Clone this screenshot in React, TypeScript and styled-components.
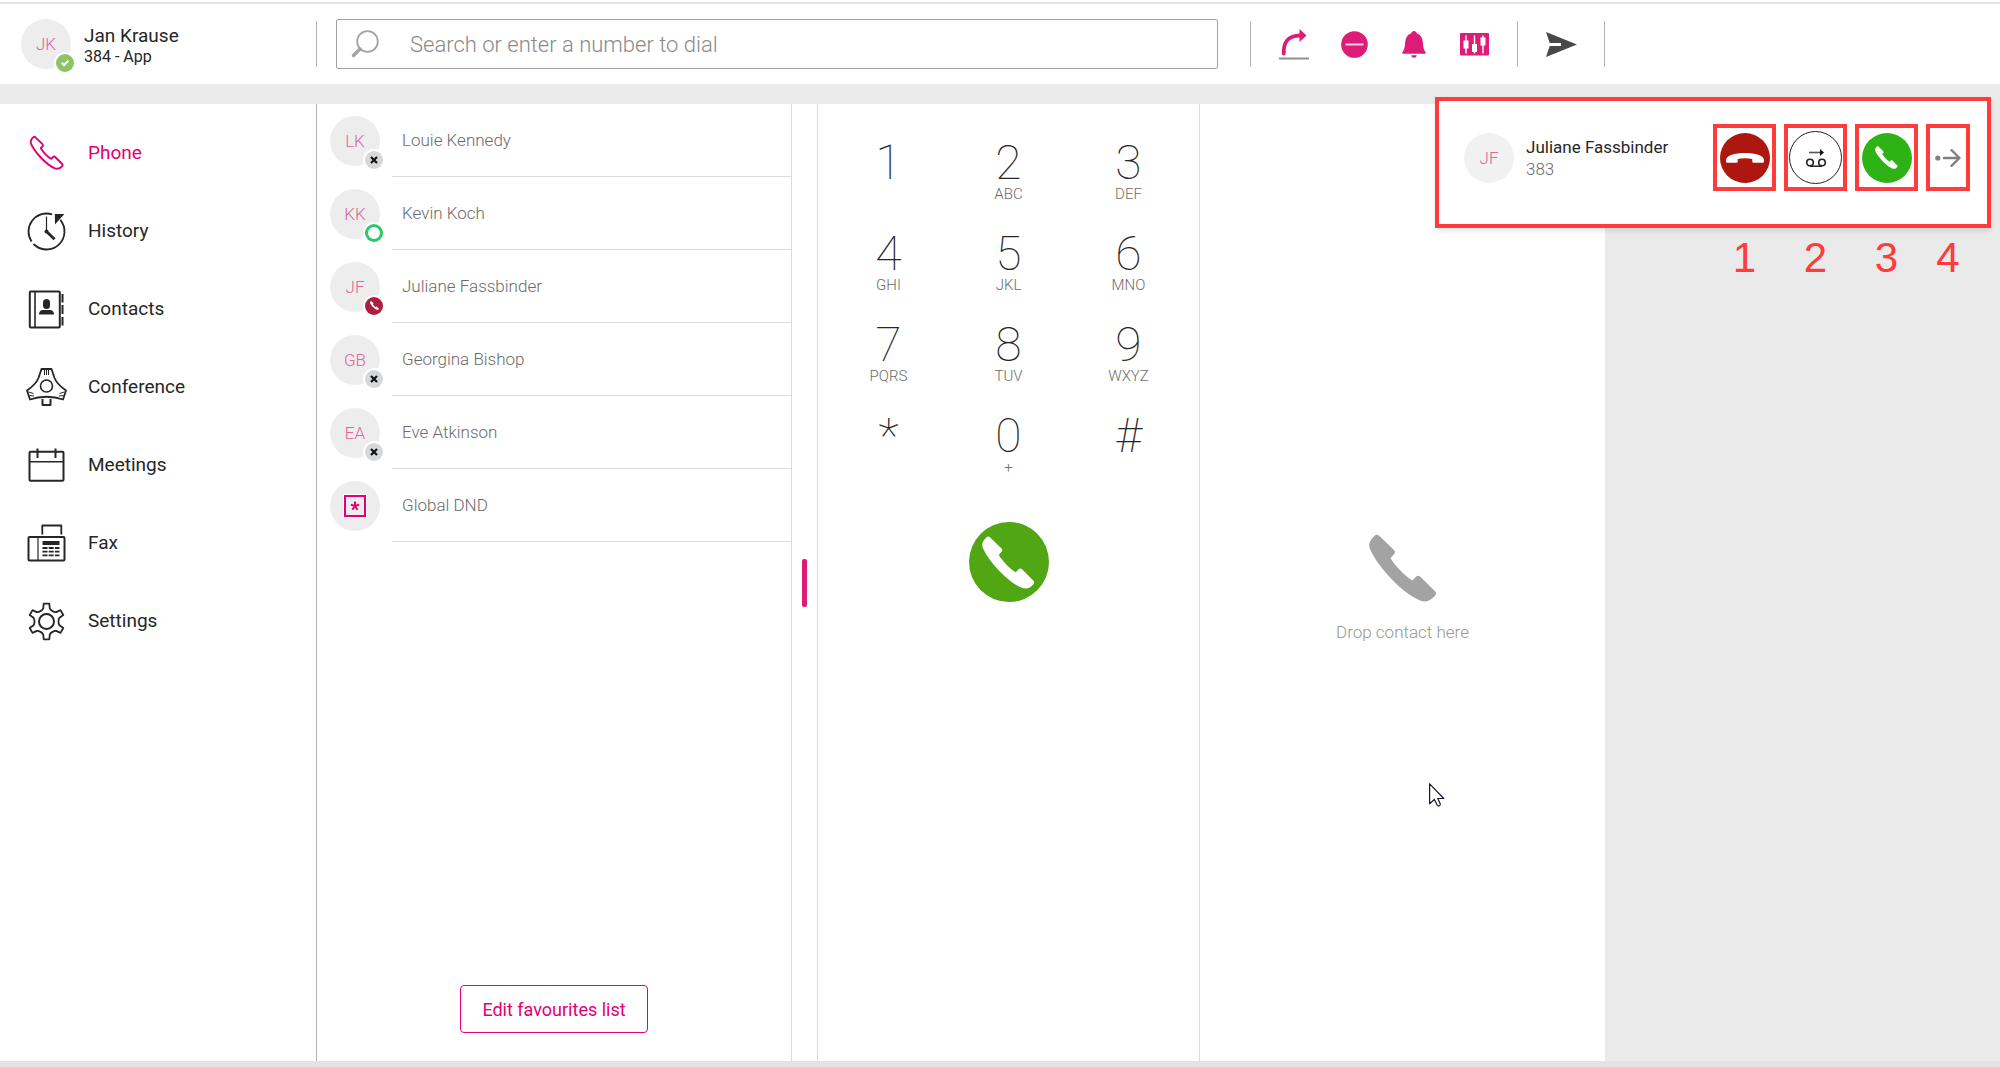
import React from "react";
import styled, { createGlobalStyle, css } from "styled-components";

const color = {
  magenta: "#e20074",
  icon: "#dc1c77",
  ink: "#262626",
  muted: "#6b6b6b",
  line: "#dcdcdc",
  edge: "#b2b2b2",
  page: "#eaeaea",
  red: "#ff3b3b",
};

const rail = "395px";
const navWidth = "317px";

const GlobalStyle = createGlobalStyle`
  *, *::before, *::after { box-sizing: border-box; }
  body { margin: 0; background: ${color.page}; color: ${color.ink}; font-family: Roboto, "Liberation Sans", sans-serif; }
  button { font: inherit; color: inherit; background: none; border: 0; padding: 0; cursor: pointer; }
  ul, ol { list-style: none; margin: 0; padding: 0; }
  svg { display: block; flex: none; overflow: visible; }
`;

const Page = styled.div`
  position: relative;
  display: flex;
  flex-direction: column;
  min-height: 100vh;
  border-top: 2px solid #fff;
  border-bottom: 6px solid #e3e3e3;
`;

const Header = styled.header`
  display: flex;
  align-items: center;
  height: 82px;
  padding-right: ${rail};
  border-top: 2px solid #e3e3e3;
  background: #fff;
`;

const User = styled.div`
  display: flex;
  align-items: center;
  flex: none;
  gap: 13px;
  width: 316px;
  padding-left: 21px;
`;

const UserText = styled.div`
  display: flex;
  flex-direction: column;
  padding-top: 3px;
`;

const UserName = styled.span`
  font-size: 19px;
  line-height: 22px;
`;

const UserLine = styled.span`
  font-size: 16px;
  line-height: 20px;
`;

const Divider = styled.span`
  flex: none;
  width: 1px;
  height: 46px;
  background: ${color.edge};
`;

const SearchBox = styled.label`
  display: flex;
  align-items: center;
  flex: 1;
  gap: 31px;
  height: 50px;
  margin: 0 32px 0 19px;
  padding-left: 14px;
  border: 1px solid #a2a2a2;
  border-radius: 2px;
`;

const SearchInput = styled.input`
  flex: 1;
  min-width: 0;
  border: 0;
  outline: 0;
  padding: 2px 0 0;
  background: none;
  font: 300 22px/28px Roboto, "Liberation Sans", sans-serif;
  color: ${color.ink};
  &::placeholder { color: #8a8a8a; opacity: 1; }
`;

const Tools = styled.div`
  display: flex;
  padding: 0 13px;
`;

const ToolButton = styled.button`
  display: grid;
  place-items: center;
  width: 60px;
  height: 46px;
`;

const Body = styled.div`
  display: grid;
  grid-template-columns: ${navWidth} minmax(0, 475fr) 26px minmax(0, 382fr) minmax(0, 405fr) ${rail};
  flex: 1;
  margin-top: 20px;
`;

const Nav = styled.nav`
  padding-top: 10px;
  background: #fff;
  border-right: 1px solid ${color.edge};
`;

const NavLink = styled.a<{ $active?: boolean }>`
  display: flex;
  align-items: center;
  gap: 21px;
  height: 78px;
  padding-left: 26px;
  font-size: 19px;
  line-height: 24px;
  text-decoration: none;
  color: ${(p) => (p.$active ? color.magenta : color.ink)};
`;

const Favourites = styled.section`
  display: flex;
  flex-direction: column;
  justify-content: space-between;
  align-items: center;
  padding-bottom: 28px;
  background: #fff;
  border-right: 1px solid ${color.line};
`;

const FavouriteList = styled.ul`
  width: 100%;
`;

const Favourite = styled.li`
  display: flex;
  align-items: center;
  gap: 12px;
  height: 73px;
  padding-left: 13px;
`;

const FavouriteName = styled.span`
  display: flex;
  align-items: center;
  flex: 1;
  height: 73px;
  padding-left: 10px;
  border-bottom: 1px solid ${color.line};
  font-size: 17px;
  font-weight: 300;
  color: ${color.muted};
`;

const AvatarCircle = styled.span<{ $pale?: boolean }>`
  position: relative;
  display: grid;
  place-items: center;
  flex: none;
  width: 50px;
  height: 50px;
  border-radius: 50%;
  background: ${(p) => (p.$pale ? "#f1f1f1" : "#ededed")};
  font-size: 17px;
  font-weight: 300;
  color: #df6699;
`;

const badgeLook = {
  available: css`background: #8cc466;`,
  offline: css`background: #d6d7d9;`,
  free: css`background: #fff; box-shadow: inset 0 0 0 3px #2fc76c, 0 0 0 2px #fff;`,
  busy: css`background: #ad1f41;`,
};
type Status = keyof typeof badgeLook;

const Badge = styled.span<{ $status: Status }>`
  position: absolute;
  right: -3px;
  bottom: -3px;
  display: grid;
  place-items: center;
  width: 18px;
  height: 18px;
  border-radius: 50%;
  box-shadow: 0 0 0 2px #fff;
  ${(p) => badgeLook[p.$status]}
`;

const StarTile = styled.span`
  display: grid;
  place-items: center;
  width: 22px;
  height: 22px;
  outline: 1px solid #fff;
  border: 2px solid ${color.magenta};
`;

const EditButton = styled.button`
  height: 48px;
  padding: 0 21px;
  border: 1px solid ${color.magenta};
  border-radius: 4px;
  font-size: 18px;
  color: ${color.magenta};
`;

const Splitter = styled.div`
  display: grid;
  place-items: center;
  background: #fff;
  border-right: 1px solid ${color.line};
`;

const Grip = styled.span`
  width: 5px;
  height: 48px;
  border-radius: 2px;
  background: ${color.icon};
`;

const DialPad = styled.section`
  display: flex;
  flex-direction: column;
  align-items: center;
  gap: 18px;
  padding-top: 36px;
  background: #fff;
  border-right: 1px solid ${color.line};
`;

const Keys = styled.div`
  display: grid;
  grid-template-columns: repeat(3, 120px);
  grid-auto-rows: 91px;
`;

const Key = styled.button`
  display: flex;
  flex-direction: column;
  align-items: center;
`;

const Digit = styled.span`
  font-size: 48px;
  line-height: 46px;
  font-weight: 100;
`;

const Letters = styled.span`
  font-size: 15px;
  line-height: 16px;
  font-weight: 300;
  color: ${color.muted};
`;

const CallButton = styled.button`
  display: grid;
  place-items: center;
  width: 80px;
  height: 80px;
  border-radius: 50%;
  background: #51a614;
`;

const DropZone = styled.section`
  display: flex;
  flex-direction: column;
  align-items: center;
  justify-content: center;
  gap: 18px;
  padding-top: 12px;
  background: #fff;
  font-size: 17px;
  line-height: 24px;
  font-weight: 300;
  color: #979797;
`;

const Incoming = styled.aside`
  position: absolute;
  top: 95px;
  right: 9px;
  width: 556px;
`;

const IncomingCard = styled.div`
  display: flex;
  align-items: flex-start;
  height: 131px;
  padding: 23px 17px 0 25px;
  border: 4px solid ${color.red};
  background: #fff;
  box-shadow: 0 3px 5px rgba(0, 0, 0, 0.1);
`;

const Caller = styled.div`
  display: flex;
  align-items: center;
  flex: 1;
  gap: 12px;
  height: 67px;
`;

const CallerText = styled.div`
  display: flex;
  flex-direction: column;
  font-size: 17px;
  line-height: 22px;
`;

const CallerNumber = styled.span`
  font-weight: 300;
  color: ${color.muted};
`;

const Actions = styled.div`
  display: flex;
  gap: 8px;
`;

const Marked = styled.span<{ $narrow?: boolean }>`
  display: grid;
  place-items: center;
  width: ${(p) => (p.$narrow ? 44 : 63)}px;
  height: 67px;
  border: 4px solid ${color.red};
`;

const RoundButton = styled.button<{ $fill: string; $outlined?: boolean }>`
  display: grid;
  place-items: center;
  width: ${(p) => (p.$outlined ? 53 : 50)}px;
  height: ${(p) => (p.$outlined ? 53 : 50)}px;
  border-radius: 50%;
  border: ${(p) => (p.$outlined ? "1px solid #222" : "0")};
  background: ${(p) => p.$fill};
`;

const Numbers = styled.ol`
  display: flex;
  justify-content: flex-end;
  gap: 8px;
  padding: 6px 21px 0 0;
`;

const NumberMark = styled.li<{ $narrow?: boolean }>`
  width: ${(p) => (p.$narrow ? 44 : 63)}px;
  text-align: center;
  font: 42px/48px "Liberation Sans", Arial, sans-serif;
  color: ${color.red};
`;

const Pointer = styled.span`
  position: absolute;
  left: 1429px;
  top: 781px;
`;

const Handset = ({ size, fill = "#fff" }: { size: number; fill?: string }) => (
  <svg width={size} height={size} viewBox="0 0 68 68" fill={fill} aria-hidden="true">
    <path d={handsetPath} />
  </svg>
);

const handsetPath =
  "M5.5 1.8C7 .3 8.8 .3 10.2 1.7L25 16C26.4 17.4 26.4 18.9 25 20.3L21.5 24.3C26 31.5 35.5 42 43.3 46.5L47 42.8C48.4 41.4 50 41.4 51.4 42.8L66 57.3C67.4 58.7 67.3 60.3 66 61.8C62 66.3 57.5 69 51 66.5C33 59 8 32 1 15C-1 9.5 1.5 5.6 5.5 1.8Z";

const NavIcon = ({ children }: { children: React.ReactNode }) => (
  <svg width="41" height="40" viewBox="0 0 41 40" fill="none" stroke="currentColor" strokeWidth="2" strokeLinejoin="round" aria-hidden="true">
    {children}
  </svg>
);

const gearPath = () => {
  const at = (deg: number, r: number) => {
    const a = (deg * Math.PI) / 180;
    return `${(20.5 + r * Math.sin(a)).toFixed(2)} ${(20.5 - r * Math.cos(a)).toFixed(2)}`;
  };
  return (
    [0, 60, 120, 180, 240, 300]
      .map((a, i) => `${i ? "L" : "M"}${at(a - 14, 13.5)}L${at(a - 9, 18)}L${at(a + 9, 18)}L${at(a + 14, 13.5)}Q${at(a + 20, 12)} ${at(a + 30, 12)}Q${at(a + 40, 12)} ${at(a + 46, 13.5)}`)
      .join("") + "Z"
  );
};

const navItems = [
  { label: "Phone", icon: <g transform="translate(4.5 3.5) scale(.48)" strokeWidth="4"><path d={handsetPath} /></g> },
  {
    label: "History",
    icon: (
      <>
        <path d="M26.06 3.38A18 18 0 0 0 5.58 30.56M7.55 33A18 18 0 0 0 34.29 8.93" strokeWidth="1.8" />
        <path d="M28.8 3h9.6L29 13.4Z" fill="currentColor" stroke="none" />
        <path d="M20.5 5.5v15" strokeWidth="1.2" />
        <path d="M20.5 20.5l8 7.8" strokeWidth="2.8" />
        <circle cx="20.5" cy="20.5" r="2" fill="currentColor" stroke="none" />
      </>
    ),
  },
  {
    label: "Contacts",
    icon: (
      <>
        <rect x="3.8" y="2.4" width="30" height="36" rx="1" />
        <path d="M9 2.4v36" strokeWidth="1.6" />
        <path d="M36.5 5v8.5M36.5 16v9M36.5 28v8.5" />
        <rect x="17" y="10" width="7" height="10" rx="3.5" fill="currentColor" stroke="none" />
        <path d="M13 25.5c0-3.4 2-4.6 4.5-4.6h6c2.5 0 4.5 1.2 4.5 4.6Z" fill="currentColor" stroke="none" />
      </>
    ),
  },
  {
    label: "Conference",
    icon: (
      <>
        <path d="M15.5 2h10L28.5 11C31 17 35 20 40 23.5L37 32.5C27 28.8 14 28.8 4 32.5L1 23.5C6 20 10 17 12.5 11Z" strokeWidth="1.8" />
        <circle cx="20.5" cy="19" r="6" strokeWidth="1.6" />
        <path d="M16.5 32v6h8v-6" />
        <path d="M18.5 3v5M20.5 3v5M22.5 3v5M2.5 25l5 1.5M3.5 28.5l4.5 .5M38.5 25l-5 1.5M37.5 28.5l-4.5 .5" strokeWidth="1" />
      </>
    ),
  },
  {
    label: "Meetings",
    icon: (
      <>
        <rect x="3.5" y="6.7" width="34" height="29" rx="1" />
        <path d="M3.5 16.7h34" strokeWidth="1.6" />
        <path d="M11.5 3.5v9.5M29.5 3.5v9.5" />
      </>
    ),
  },
  {
    label: "Fax",
    icon: (
      <>
        <rect x="2.5" y="14" width="36" height="23.5" rx="1" />
        <path d="M12 14v23.5" strokeWidth="1.2" />
        <path d="M16.3 11.5v-9h19v9" strokeWidth="1.8" />
        <path d="M16.5 20h17" strokeWidth="4" />
        <path d="M16.5 25h17M16.5 28.7h17M16.5 32.3h17" strokeWidth="1.8" strokeDasharray="5 1.2" />
      </>
    ),
  },
  {
    label: "Settings",
    icon: (
      <>
        <path d={gearPath()} strokeWidth="1.8" />
        <circle cx="20.5" cy="20.5" r="7.5" />
      </>
    ),
  },
];

const badgeIcon: Record<Status, React.ReactNode> = {
  available: (
    <svg width="8" height="6" viewBox="0 0 8 6" fill="none" stroke="#fff" strokeWidth="2" aria-hidden="true">
      <path d="M.7 2.8L3 5L7.3 .7" />
    </svg>
  ),
  offline: (
    <svg width="6" height="6" viewBox="0 0 6 6" stroke="#111" strokeWidth="2.2" aria-hidden="true">
      <path d="M0 0L6 6M6 0L0 6" />
    </svg>
  ),
  free: null,
  busy: <Handset size={9} />,
};

const Avatar = ({ initials, status, pale }: { initials: React.ReactNode; status?: Status; pale?: boolean }) => (
  <AvatarCircle $pale={pale}>
    {initials}
    {status && <Badge $status={status}>{badgeIcon[status]}</Badge>}
  </AvatarCircle>
);

const star = (
  <StarTile>
    <svg width="10" height="10" viewBox="0 0 10 10" stroke={color.magenta} strokeWidth="2" aria-hidden="true">
      <path d="M5 5V.5M5 5L.8 3.6M5 5L9.2 3.6M5 5L2.4 8.8M5 5L7.6 8.8" />
    </svg>
  </StarTile>
);

const favourites: { initials: React.ReactNode; name: string; status?: Status }[] = [
  { initials: "LK", name: "Louie Kennedy", status: "offline" },
  { initials: "KK", name: "Kevin Koch", status: "free" },
  { initials: "JF", name: "Juliane Fassbinder", status: "busy" },
  { initials: "GB", name: "Georgina Bishop", status: "offline" },
  { initials: "EA", name: "Eve Atkinson", status: "offline" },
  { initials: star, name: "Global DND" },
];

const keys = [
  ["1", ""], ["2", "ABC"], ["3", "DEF"],
  ["4", "GHI"], ["5", "JKL"], ["6", "MNO"],
  ["7", "PQRS"], ["8", "TUV"], ["9", "WXYZ"],
  ["*", ""], ["0", "+"], ["#", ""],
];

const App = () => (
  <>
    <GlobalStyle />
    <Page>
      <Header>
        <User>
          <Avatar initials="JK" status="available" />
          <UserText>
            <UserName>Jan Krause</UserName>
            <UserLine>384 - App</UserLine>
          </UserText>
        </User>
        <Divider />
        <SearchBox>
          <svg width="28" height="28" viewBox="0 0 28 28" fill="none" stroke="#a3a3a3" aria-hidden="true">
            <circle cx="16.5" cy="11.5" r="10.3" strokeWidth="1.8" />
            <path d="M9 19L2.5 25.5" strokeWidth="3.4" strokeLinecap="round" />
          </svg>
          <SearchInput type="search" aria-label="Search" placeholder="Search or enter a number to dial" />
        </SearchBox>
        <Divider />
        <Tools>
          <ToolButton aria-label="Call forwarding">
            <svg width="30" height="31" viewBox="0 0 30 31" fill="none" aria-hidden="true">
              <path d="M4.7 24.5C4.5 12.5 9 6.8 21 6.5" stroke={color.icon} strokeWidth="3.8" strokeLinecap="round" />
              <path d="M20.5 0L27.5 6.5L20.5 13Z" fill={color.icon} />
              <path d="M0 29.5h30" stroke="#8f8f8f" strokeWidth="2" />
            </svg>
          </ToolButton>
          <ToolButton aria-label="Do not disturb">
            <svg width="27" height="27" viewBox="0 0 27 27" aria-hidden="true">
              <circle cx="13.5" cy="13.5" r="13.3" fill={color.icon} />
              <path d="M4.5 13.5h18" stroke="#f7cfe2" strokeWidth="2" />
            </svg>
          </ToolButton>
          <ToolButton aria-label="Notifications">
            <svg width="24" height="27" viewBox="0 0 24 27" fill={color.icon} aria-hidden="true">
              <path d="M12 0c1.5 0 2.5 1 2.7 2.2C18.5 3.5 20.5 6.5 20.8 11c.2 4.5.7 7.5 2.9 10.6.3.6 0 1.2-.7 1.2H1c-.7 0-1-.6-.7-1.2C2.5 18.5 3 15.5 3.2 11c.3-4.5 2.3-7.5 6.1-8.8C9.5 1 10.5 0 12 0ZM9.3 24.3h5.4c0 1.6-1.2 2.5-2.7 2.5s-2.7-.9-2.7-2.5Z" />
            </svg>
          </ToolButton>
          <ToolButton aria-label="Audio settings">
            <svg width="29" height="23" viewBox="0 0 29 23" aria-hidden="true">
              <rect width="29" height="22.5" rx="1" fill={color.icon} />
              <path d="M6 2.5v18M14.5 2.5v18M23 2.5v18" stroke="#fff" strokeWidth="1.4" />
              <path d="M3.5 7.5h5v8h-5ZM12 11h5v8h-5ZM20.5 4.5h5v8h-5Z" fill="#fff" />
            </svg>
          </ToolButton>
        </Tools>
        <Divider />
        <Tools>
          <ToolButton aria-label="Send">
            <svg width="31" height="25" viewBox="0 0 31 25" fill="#484848" aria-hidden="true">
              <path d="M0 0L31 12.5L0 25L3.7 14H15v-3H3.7Z" />
            </svg>
          </ToolButton>
        </Tools>
        <Divider />
      </Header>

      <Body>
        <Nav>
          {navItems.map((item, i) => (
            <NavLink key={item.label} href="#" $active={i === 0}>
              <NavIcon>{item.icon}</NavIcon>
              {item.label}
            </NavLink>
          ))}
        </Nav>
        <Favourites>
          <FavouriteList>
            {favourites.map((f) => (
              <Favourite key={f.name}>
                <Avatar initials={f.initials} status={f.status} />
                <FavouriteName>{f.name}</FavouriteName>
              </Favourite>
            ))}
          </FavouriteList>
          <EditButton>Edit favourites list</EditButton>
        </Favourites>
        <Splitter>
          <Grip />
        </Splitter>
        <DialPad>
          <Keys>
            {keys.map(([digit, letters]) => (
              <Key key={digit}>
                <Digit>{digit}</Digit>
                <Letters>{letters}</Letters>
              </Key>
            ))}
          </Keys>
          <CallButton aria-label="Call">
            <Handset size={53} />
          </CallButton>
        </DialPad>
        <DropZone>
          <Handset size={68} fill="#a3a3a3" />
          Drop contact here
        </DropZone>
      </Body>

      <Incoming>
        <IncomingCard>
          <Caller>
            <Avatar initials="JF" pale />
            <CallerText>
              <span>Juliane Fassbinder</span>
              <CallerNumber>383</CallerNumber>
            </CallerText>
          </Caller>
          <Actions>
            <Marked>
              <RoundButton $fill="#ad1710" aria-label="Decline">
                <svg width="38" height="10" viewBox="0 0 38 10" fill="#fff" aria-hidden="true">
                  <path d="M0 7.5C0 2 9 0 19 0S38 2 38 7.5V8.5Q38 9.8 36.7 9.8H27.5Q26.3 9.8 26.3 8.6V6C22 5 16 5 11.7 6V8.6Q11.7 9.8 10.5 9.8H1.3Q0 9.8 0 8.5Z" />
                </svg>
              </RoundButton>
            </Marked>
            <Marked>
              <RoundButton $fill="#fff" $outlined aria-label="Send to voicemail">
                <svg width="20" height="18" viewBox="0 0 20 18" fill="none" stroke="#222" aria-hidden="true">
                  <path d="M3 3.5h11" strokeWidth="1.6" stroke="#555" />
                  <path d="M14 0L18 3.5L14 7Z" fill="#111" stroke="none" />
                  <circle cx="4" cy="13.5" r="3.3" strokeWidth="1.6" />
                  <circle cx="16" cy="13.5" r="3.3" strokeWidth="1.6" />
                  <path d="M4 17.2h12" strokeWidth="1.5" />
                </svg>
              </RoundButton>
            </Marked>
            <Marked>
              <RoundButton $fill="#2fb216" aria-label="Accept">
                <Handset size={23} />
              </RoundButton>
            </Marked>
            <Marked $narrow>
              <button aria-label="Forward">
                <svg width="26" height="18" viewBox="0 0 26 18" fill="none" stroke="#808080" strokeWidth="2.4" strokeLinecap="round" strokeLinejoin="round" aria-hidden="true">
                  <circle cx="2.8" cy="9" r="2.6" fill="#808080" stroke="none" />
                  <path d="M9 9h15.5M16.5 1.2L24.5 9L16.5 16.8" />
                </svg>
              </button>
            </Marked>
          </Actions>
        </IncomingCard>
        <Numbers>
          <NumberMark>1</NumberMark>
          <NumberMark>2</NumberMark>
          <NumberMark>3</NumberMark>
          <NumberMark $narrow>4</NumberMark>
        </Numbers>
      </Incoming>

      <Pointer>
        <svg width="16" height="24" viewBox="0 0 16 24" fill="#fff" stroke="#16162a" strokeWidth="1.2" strokeLinejoin="round" aria-hidden="true">
          <path d="M.6 .8V20.8L5.4 16.5L8.3 22.3C9 23.6 11.8 22.5 11.3 21L8.8 15.5H14.8Z" />
        </svg>
      </Pointer>
    </Page>
  </>
);

export default App;
